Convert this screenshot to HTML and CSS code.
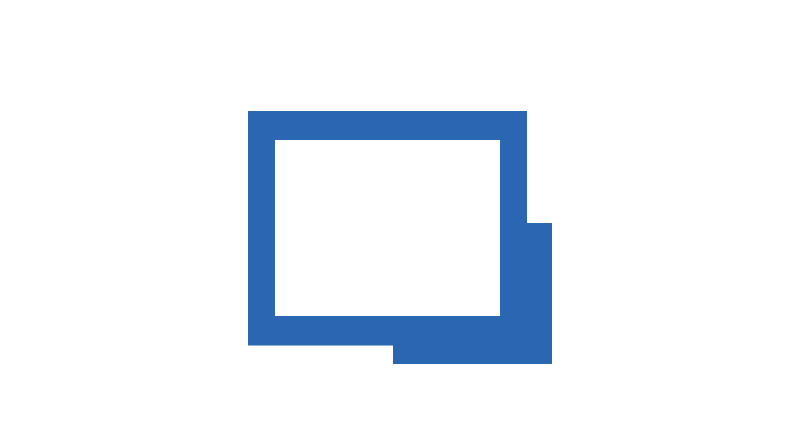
FILE: index.html
```html
<!DOCTYPE html>
<html lang="en">
<head>
<meta charset="utf-8">
<title>Logo</title>
<link rel="stylesheet" href="styles.css">
</head>
<body>
<main class="stage">
<svg class="logo" width="800" height="444" viewBox="0 0 800 444" role="img" aria-label="Window icon">
<path class="logo-mark" fill-rule="evenodd" d="M248 111H527V223H552V364H393V345.5H248ZM275 140V316H500V140Z"/>
</svg>
</main>
</body>
</html>
```
FILE: styles.css
```css
html, body {
  margin: 0;
  padding: 0;
  background: #ffffff;
}
.stage {
  display: flex;
  width: 800px;
  height: 444px;
  overflow: hidden;
}
.logo {
  display: block;
}
.logo-mark {
  fill: #2b66b3;
}
```
